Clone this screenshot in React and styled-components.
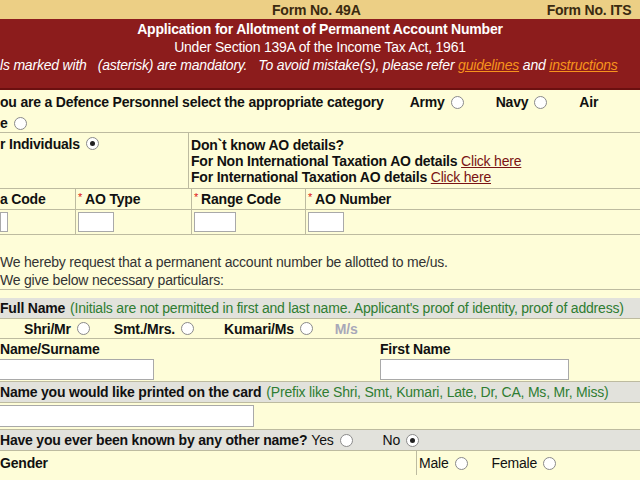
import React from 'react';
import styled, { createGlobalStyle } from 'styled-components';

const Global = createGlobalStyle`
  html, body { margin: 0; padding: 0; background: #fefdd8; overflow: hidden; }
  body { font-family: "Liberation Sans", Arial, sans-serif; }
`;

const Page = styled.div`
  width: 640px;
  background: #fefdd8;
  color: #111;
  font-size: 14px;
  letter-spacing: -0.2px;
`;

const TopBar = styled.div`
  height: 19px;
  background: #eccf85;
  display: flex;
  align-items: center;
  font-weight: bold;
  font-size: 14px;
  color: #3a2a10;
`;

const TopItem = styled.span`
  margin-left: ${p => p.$left}px;
`;

const Banner = styled.div`
  background: #8c1c1c;
  color: #fff;
  height: 68px;
  padding-top: 1px;
  text-align: center;
  border-bottom: 2px solid #6b1010;
`;

const BannerLine = styled.div`
  line-height: 18px;
  font-size: 14px;
  font-weight: ${p => (p.$bold ? 'bold' : 'normal')};
  font-style: ${p => (p.$italic ? 'italic' : 'normal')};
  text-align: ${p => (p.$left ? 'left' : 'center')};
  white-space: nowrap;
`;

const OrangeLink = styled.span`
  color: #f7941d;
  text-decoration: underline;
`;

const Row = styled.div`
  display: flex;
  align-items: center;
  height: ${p => p.$h || 20}px;
  border-bottom: ${p => (p.$line ? '1px solid #bdbba0' : 'none')};
  background: ${p => (p.$gray ? '#e2e2dc' : 'transparent')};
  font-weight: ${p => (p.$bold ? 'bold' : 'normal')};
  white-space: nowrap;
  overflow: hidden;
`;

const Cell = styled.div`
  width: ${p => (p.$w ? p.$w + 'px' : 'auto')};
  flex: ${p => (p.$w ? 'none' : 1)};
  align-self: stretch;
  display: flex;
  flex-direction: column;
  justify-content: ${p => p.$justify || 'center'};
  border-right: ${p => (p.$line ? '1px solid #bdbba0' : 'none')};
  padding-left: ${p => p.$pad || 0}px;
  white-space: nowrap;
`;

const Radio = styled.span`
  display: inline-block;
  flex: none;
  width: 11px;
  height: 11px;
  border: 1px solid #8a8a8a;
  border-radius: 50%;
  background: #fff;
  margin: 0 ${p => p.$after || 0}px 0 6px;
  vertical-align: -1px;
  position: relative;
  &::after {
    content: '';
    display: ${p => (p.$on ? 'block' : 'none')};
    position: absolute;
    left: 3px;
    top: 3px;
    width: 5px;
    height: 5px;
    border-radius: 50%;
    background: #222;
  }
`;

const Star = styled.span`
  color: #d11;
  font-weight: normal;
  font-size: 11px;
  vertical-align: top;
  margin-right: 3px;
`;

const DarkLink = styled.span`
  color: #7a1414;
  font-weight: normal;
  text-decoration: underline;
`;

const Note = styled.span`
  color: #2f7d32;
  font-weight: normal;
  margin-left: 5px;
`;

const Plain = styled.div`
  font-size: 14px;
  line-height: 17px;
  color: #333;
`;

const Input = styled.div`
  flex: none;
  width: ${p => p.$w}px;
  height: ${p => p.$h || 20}px;
  background: #fff;
  border: 1px solid #a9a9a9;
  margin-left: ${p => p.$ml || 0}px;
  box-sizing: border-box;
`;

const Light = styled.span`
  color: #a8a8b8;
  margin-left: 22px;
`;

const Normal = styled.span`
  font-weight: normal;
  margin-left: ${p => p.$ml || 0}px;
`;

export default function App() {
  return (
    <Page>
      <Global />
      <TopBar>
        <TopItem $left={272}>Form No. 49A</TopItem>
        <TopItem $left={186}>Form No. ITS</TopItem>
      </TopBar>
      <Banner>
        <BannerLine $bold>Application for Allotment of Permanent Account Number</BannerLine>
        <BannerLine>Under Section 139A of the Income Tax Act, 1961</BannerLine>
        <BannerLine $italic $left>
          ls marked with &nbsp;&nbsp;(asterisk) are mandatory. &nbsp;&nbsp;To avoid mistake(s), please refer{' '}
          <OrangeLink>guidelines</OrangeLink> and <OrangeLink>instructions</OrangeLink>
        </BannerLine>
      </Banner>

      <Row $bold $h={24}>
        ou are a Defence Personnel select the appropriate category
        <span style={{ marginLeft: 26 }}>Army</span><Radio $after={32} />
        Navy<Radio $after={32} />Air
      </Row>
      <Row $bold $h={18} $line>e<Radio /></Row>

      <Row $bold $h={55} $line>
        <Cell $w={188} $line $justify="flex-start">
          <div style={{ paddingTop: 3 }}>r Individuals<Radio $on /></div>
        </Cell>
        <Cell $pad={2}>
          <div>Don`t know AO details?</div>
          <div>For Non International Taxation AO details <DarkLink>Click here</DarkLink></div>
          <div>For International Taxation AO details <DarkLink>Click here</DarkLink></div>
        </Cell>
      </Row>
      <Row $bold $h={20} $line>
        <Cell $w={75} $line>a Code</Cell>
        <Cell $w={113} $line $pad={2}><span><Star>*</Star>AO Type</span></Cell>
        <Cell $w={111} $line $pad={2}><span><Star>*</Star>Range Code</span></Cell>
        <Cell $pad={2}><span><Star>*</Star>AO Number</span></Cell>
      </Row>
      <Row $h={24} $line>
        <Cell $w={75} $line><Input $w={8} /></Cell>
        <Cell $w={113} $line $pad={2}><Input $w={36} /></Cell>
        <Cell $w={111} $line $pad={2}><Input $w={42} /></Cell>
        <Cell $pad={2}><Input $w={36} /></Cell>
      </Row>

      <div style={{ height: 19 }} />
      <Plain>We hereby request that a permanent account number be allotted to me/us.</Plain>
      <Row $h={18} $line><Plain>We give below necessary particulars:</Plain></Row>
      <div style={{ height: 8 }} />

      <Row $gray $bold $h={20} $line>
        Full Name<Note>(Initials are not permitted in first and last name. Applicant's proof of identity, proof of address)</Note>
      </Row>
      <Row $bold $h={19} $line>
        <span style={{ marginLeft: 24 }}>Shri/Mr</span><Radio $after={24} />
        Smt./Mrs.<Radio $after={30} />
        Kumari/Ms<Radio />
        <Light>M/s</Light>
      </Row>
      <Row $bold $h={19}>
        <Cell $w={380}>Name/Surname</Cell>
        <Cell>First Name</Cell>
      </Row>
      <Row $h={23} $line>
        <Input $w={155} $h={21} $ml={-1} />
        <Input $w={189} $h={21} $ml={226} />
      </Row>
      <Row $gray $bold $h={20} $line>
        Name you would like printed on the card<Note>(Prefix like Shri, Smt, Kumari, Late, Dr, CA, Ms, Mr, Miss)</Note>
      </Row>
      <Row $h={26} $line>
        <Input $w={255} $h={22} $ml={-1} />
      </Row>
      <Row $gray $bold $h={20} $line>
        Have you ever been known by any other name?
        <Normal $ml={4}>Yes</Normal><Radio $after={30} />
        <Normal>No</Normal><Radio $on />
      </Row>
      <Row $bold $h={24}>
        <Cell $w={416} $line>Gender</Cell>
        <Cell $pad={2} style={{ fontWeight: 'normal', flexDirection: 'row', alignItems: 'center', justifyContent: 'flex-start' }}>
          Male<Radio $after={24} />Female<Radio />
        </Cell>
      </Row>
    </Page>
  );
}
